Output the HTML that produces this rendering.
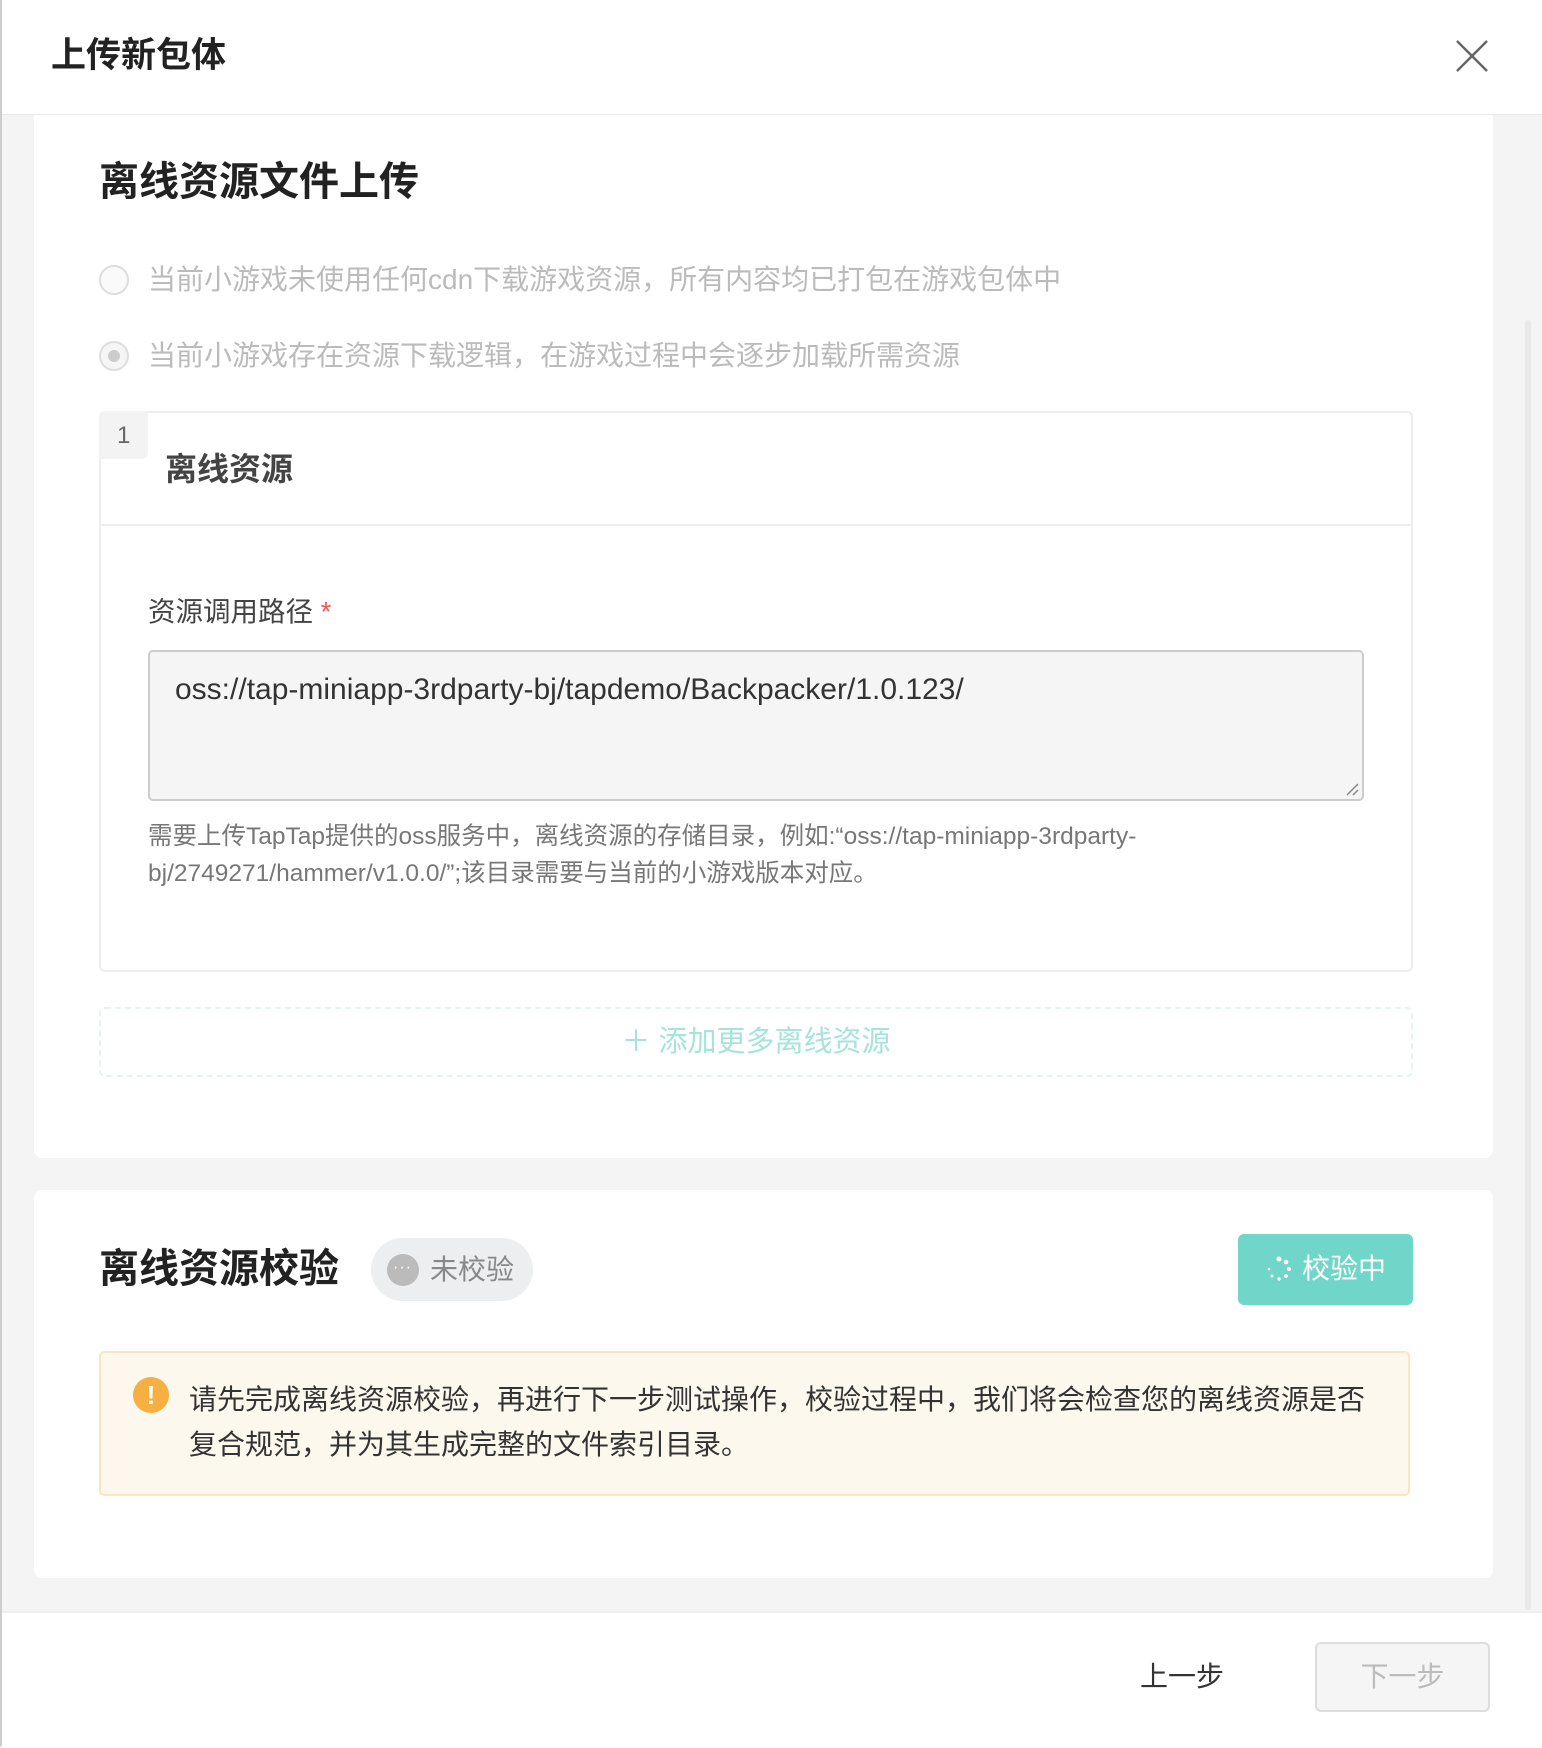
<!DOCTYPE html><html><head><meta charset="utf-8"><style>
body{margin:0;width:1542px;height:1746px;position:relative;overflow:hidden;background:#f4f4f4;font-family:"Liberation Sans","Noto Sans CJK SC",sans-serif}
.a{position:absolute}
.t{white-space:nowrap;line-height:1}
</style></head><body>
<div class="a" style="left:0;top:0;width:2px;height:1746px;background:#ccc"></div>
<div class="a" style="left:2px;top:0;width:1540px;height:114px;background:#fff;border-bottom:1px solid #e6e8ea"></div>
<div class="a t" style="left:51px;top:38px;font-size:35px;font-weight:bold;color:#222">上传新包体</div>
<svg class="a" style="left:1455px;top:39px" width="34" height="34"><path d="M2 2L32 32M32 2L2 32" stroke="#666" stroke-width="2.5"/></svg>
<div class="a" style="left:1525px;top:320px;width:6px;height:1290px;background:#e8e8e8;border-radius:3px"></div>
<div class="a" style="left:34px;top:115px;width:1459px;height:1043px;background:#fff;border-radius:0 0 8px 8px"></div>
<div class="a t" style="left:99px;top:162px;font-size:40px;font-weight:bold;color:#222">离线资源文件上传</div>
<div class="a" style="left:99px;top:265px;width:30px;height:30px;border:2px solid #ddd;border-radius:50%;background:#fafafa;box-sizing:border-box"></div>
<div class="a t" style="left:148px;top:266px;font-size:28px;color:#bbb">当前小游戏未使用任何cdn下载游戏资源，所有内容均已打包在游戏包体中</div>
<div class="a" style="left:99px;top:341px;width:30px;height:30px;border:2px solid #ddd;border-radius:50%;background:#f5f5f5;box-sizing:border-box"></div>
<div class="a" style="left:108px;top:350px;width:12px;height:12px;border-radius:50%;background:#ccc"></div>
<div class="a t" style="left:148px;top:342px;font-size:28px;color:#bbb">当前小游戏存在资源下载逻辑，在游戏过程中会逐步加载所需资源</div>
<div class="a" style="left:99px;top:411px;width:1314px;height:561px;border:2px solid #eee;border-radius:6px;box-sizing:border-box"></div>
<div class="a" style="left:99px;top:524px;width:1314px;height:2px;background:#eee"></div>
<div class="a" style="left:99px;top:411px;width:49px;height:48px;background:#f3f3f3;border-radius:6px 0 6px 0"></div>
<div class="a t" style="left:117px;top:424px;font-size:24px;color:#666">1</div>
<div class="a t" style="left:165px;top:453px;font-size:32px;font-weight:bold;color:#444">离线资源</div>
<div class="a t" style="left:148px;top:598px;font-size:27.5px;color:#444">资源调用路径 <span style="color:#e55">*</span></div>
<div class="a" style="left:148px;top:650px;width:1216px;height:151px;background:#f5f5f5;border:2px solid #ccc;border-radius:5px;box-sizing:border-box"></div>
<svg class="a" style="left:1345px;top:782px" width="14" height="14"><path d="M13 2L2 13M13 8L8 13" stroke="#888" stroke-width="1.5"/></svg>
<div class="a t" style="left:175px;top:675px;font-size:30px;color:#333">oss://tap-miniapp-3rdparty-bj/tapdemo/Backpacker/1.0.123/</div>
<div class="a t" style="left:148px;top:818px;font-size:24.5px;color:#777;line-height:37px">需要上传TapTap提供的oss服务中，离线资源的存储目录，例如:“oss://tap-miniapp-3rdparty-<br>bj/2749271/hammer/v1.0.0/”;该目录需要与当前的小游戏版本对应。</div>
<div class="a" style="left:99px;top:1007px;width:1314px;height:70px;border:2px dashed #e2f5f2;border-radius:6px;box-sizing:border-box"></div>
<div class="a t" style="left:0;width:1512px;text-align:center;top:1028px;font-size:29px;color:#a6e3da">＋ 添加更多离线资源</div>
<div class="a" style="left:34px;top:1190px;width:1459px;height:388px;background:#fff;border-radius:8px"></div>
<div class="a t" style="left:99px;top:1249px;font-size:40px;font-weight:bold;color:#222">离线资源校验</div>
<div class="a" style="left:371px;top:1238px;width:162px;height:63px;background:#eceef0;border-radius:32px"></div>
<div class="a" style="left:387px;top:1254px;width:32px;height:32px;border-radius:50%;background:#bbb"></div>
<div class="a t" style="left:393px;top:1260px;font-size:16px;color:#fff;letter-spacing:1px">···</div>
<div class="a t" style="left:430px;top:1256px;font-size:28px;color:#888">未校验</div>
<div class="a" style="left:1238px;top:1234px;width:175px;height:71px;background:#6fd6c9;border-radius:6px"></div>
<svg class="a" style="left:1266px;top:1256px" width="26" height="26"><g fill="#fff"><circle cx="13" cy="3" r="2.5"/><circle cx="20" cy="6" r="2.3"/><circle cx="23" cy="13" r="2.1"/><circle cx="20" cy="20" r="1.9"/><circle cx="13" cy="23" r="1.7"/><circle cx="6" cy="20" r="1.5"/><circle cx="3" cy="13" r="1.3"/></g></svg>
<div class="a t" style="left:1302px;top:1255px;font-size:28px;color:#fff">校验中</div>
<div class="a" style="left:99px;top:1351px;width:1311px;height:145px;background:#fcf8ee;border:2px solid #fbe6c0;border-radius:5px;box-sizing:border-box"></div>
<div class="a" style="left:133px;top:1377px;width:36px;height:36px;border-radius:50%;background:#f5b041"></div>
<div class="a t" style="left:133px;width:36px;text-align:center;top:1382px;font-size:26px;color:#fff;font-weight:bold">!</div>
<div class="a t" style="left:189px;top:1377px;font-size:28px;color:#333;line-height:45px">请先完成离线资源校验，再进行下一步测试操作，校验过程中，我们将会检查您的离线资源是否<br>复合规范，并为其生成完整的文件索引目录。</div>
<div class="a" style="left:2px;top:1611px;width:1540px;height:135px;background:#fff;border-top:2px solid #eee"></div>
<div class="a t" style="left:1140px;top:1663px;font-size:28px;color:#333">上一步</div>
<div class="a" style="left:1315px;top:1642px;width:175px;height:70px;background:#f5f5f5;border:2px solid #ddd;border-radius:6px;box-sizing:border-box"></div>
<div class="a t" style="left:1315px;width:175px;text-align:center;top:1663px;font-size:28px;color:#bbb">下一步</div>
</body></html>
